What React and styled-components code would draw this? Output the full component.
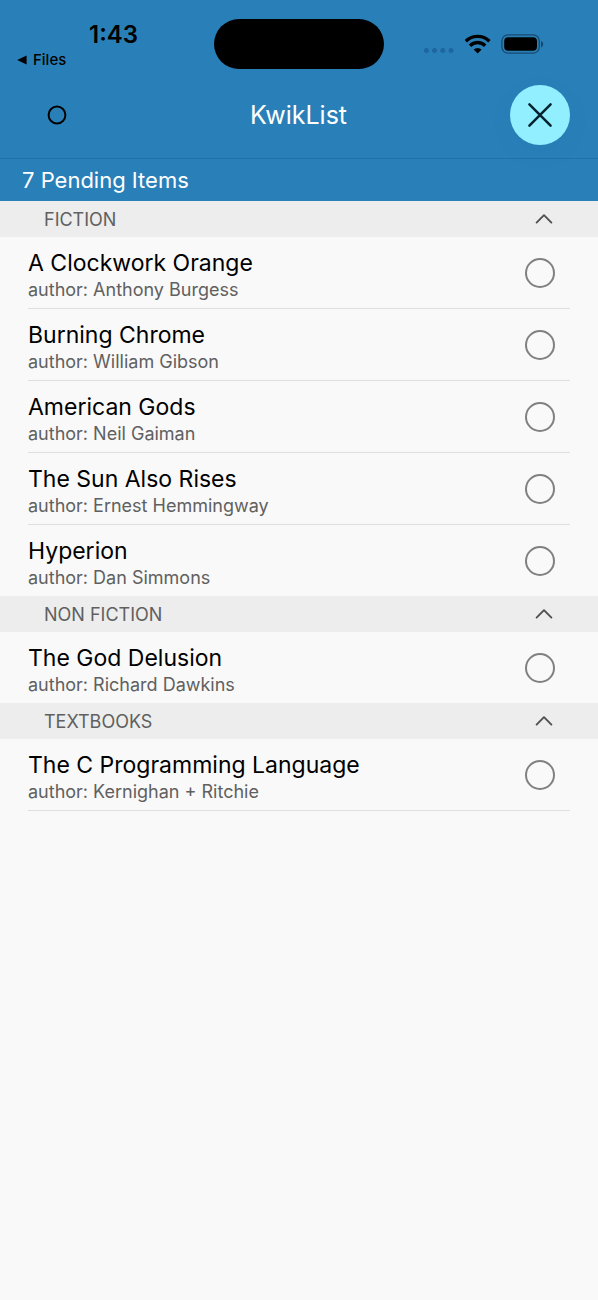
import React, { useState } from "react";
import styled, { createGlobalStyle } from "styled-components";

const lists = [
  {
    name: "Fiction",
    items: [
      { title: "A Clockwork Orange", author: "Anthony Burgess" },
      { title: "Burning Chrome", author: "William Gibson" },
      { title: "American Gods", author: "Neil Gaiman" },
      { title: "The Sun Also Rises", author: "Ernest Hemmingway" },
      { title: "Hyperion", author: "Dan Simmons" },
    ],
  },
  {
    name: "Non Fiction",
    items: [{ title: "The God Delusion", author: "Richard Dawkins" }],
  },
  {
    name: "Textbooks",
    items: [
      { title: "The C Programming Language", author: "Kernighan + Ritchie" },
    ],
  },
];

const StatusIcons = () => (
  <>
    <svg width="32" height="20" viewBox="0 0 32 20" aria-hidden="true">
      <g fill="#1f659f">
        <circle cx="3.4" cy="16.6" r="2.5" />
        <circle cx="11.6" cy="16.6" r="2.5" />
        <circle cx="19.8" cy="16.6" r="2.5" />
        <circle cx="28" cy="16.6" r="2.5" />
      </g>
    </svg>
    <svg width="26" height="20" viewBox="0 0 26 20" aria-hidden="true">
      <g fill="none" stroke="#000" strokeWidth="3.4">
        <path d="M0.8 7.2a16.8 16.8 0 0 1 23.6 0" />
        <path d="M5 11.7a10.8 10.8 0 0 1 15.2 0" />
      </g>
      <path d="M12.6 19.6l-4-4a5.8 5.8 0 0 1 8 0z" />
    </svg>
    <svg width="43" height="20" viewBox="0 0 43 20" aria-hidden="true">
      <rect
        x="0.9"
        y="0.9"
        width="37.4"
        height="18.2"
        rx="6"
        fill="none"
        stroke="#174a70"
        strokeWidth="1.3"
      />
      <rect x="3.2" y="3.2" width="32.8" height="13.6" rx="4" />
      <path d="M40 7v6.4c3-1 3-5.4 0-6.4z" fill="#174a70" />
    </svg>
  </>
);

const App = () => {
  const [closed, setClosed] = useState({});
  const [done, setDone] = useState({});

  const pending = lists
    .flatMap((list) => list.items)
    .filter((item) => !done[item.title]).length;

  const toggleList = (name) => setClosed({ ...closed, [name]: !closed[name] });
  const toggleItem = (title) => setDone({ ...done, [title]: !done[title] });

  return (
    <Page>
      <GlobalStyle />
      <Header>
        <StatusBar>
          <StatusLeft>
            <Time>1:43</Time>
            <BackLink href="#files">
              <svg width="10" height="10" viewBox="0 0 10 10" aria-hidden="true">
                <path d="M9.6 0.4v9.2L0.2 5z" />
              </svg>
              Files
            </BackLink>
          </StatusLeft>
          <Island />
          <StatusRight>
            <StatusIcons />
          </StatusRight>
        </StatusBar>
        <NavBar>
          <NavButton aria-label="Menu">
            <svg width="20" height="20" viewBox="0 0 20 20">
              <circle
                cx="10"
                cy="10"
                r="8.4"
                fill="none"
                stroke="#000"
                strokeWidth="2"
              />
            </svg>
          </NavButton>
          <NavTitle>KwikList</NavTitle>
          <NavButton $filled aria-label="Close">
            <svg width="26" height="26" viewBox="0 0 26 26">
              <path
                d="M2.4 2.4l21.2 21.2M23.6 2.4L2.4 23.6"
                fill="none"
                stroke="#06222e"
                strokeWidth="2.5"
                strokeLinecap="round"
              />
            </svg>
          </NavButton>
        </NavBar>
        <Pending>{pending} Pending Items</Pending>
      </Header>

      <main>
        {lists.map((list) => (
          <section key={list.name}>
            <ListHeader
              aria-expanded={!closed[list.name]}
              onClick={() => toggleList(list.name)}
            >
              {list.name}
              <Chevron
                $closed={closed[list.name]}
                width="18"
                height="12"
                viewBox="0 0 18 12"
                aria-hidden="true"
              >
                <path
                  d="M1.6 9.6L9 2.2l7.4 7.4"
                  fill="none"
                  stroke="#505050"
                  strokeWidth="1.9"
                  strokeLinejoin="round"
                  strokeLinecap="round"
                />
              </Chevron>
            </ListHeader>
            {!closed[list.name] && (
              <Items>
                {list.items.map((item) => (
                  <Item key={item.title}>
                    <ItemLabel>
                      <ItemText>
                        <ItemTitle>{item.title}</ItemTitle>
                        <ItemAuthor>author: {item.author}</ItemAuthor>
                      </ItemText>
                      <Check
                        type="checkbox"
                        checked={!!done[item.title]}
                        onChange={() => toggleItem(item.title)}
                      />
                    </ItemLabel>
                  </Item>
                ))}
              </Items>
            )}
          </section>
        ))}
      </main>
    </Page>
  );
};

export default App;

const GlobalStyle = createGlobalStyle`
  * {
    box-sizing: border-box;
  }
  body {
    margin: 0;
    background-color: #f9f9f9;
    font-family: Inter, "Liberation Sans", sans-serif;
  }
`;

const Page = styled.div`
  min-height: 100vh;
  background-color: #f9f9f9;
`;

const Header = styled.header`
  background-color: #2980b9;
  color: white;
`;

const StatusBar = styled.div`
  display: grid;
  grid-template-columns: 1fr 170px 1fr;
  padding-top: 19px;
  color: black;
`;

const StatusLeft = styled.div`
  padding: 1px 0 0 17px;
`;

const Time = styled.div`
  padding-left: 72px;
  font-size: 24px;
  font-weight: 600;
  line-height: 30px;
`;

const BackLink = styled.a`
  display: flex;
  align-items: center;
  gap: 6px;
  font-size: 15px;
  font-weight: 500;
  line-height: 20px;
  color: black;
  text-decoration: none;
`;

const Island = styled.div`
  height: 50px;
  border-radius: 25px;
  background-color: black;
`;

const StatusRight = styled.div`
  display: flex;
  align-items: center;
  justify-content: flex-end;
  gap: 10px;
  height: 50px;
  padding-right: 54px;
`;

const NavBar = styled.nav`
  display: flex;
  align-items: center;
  justify-content: space-between;
  padding: 15px 28px 13px 27px;
  border-bottom: 1px solid #2270a8;
`;

const NavButton = styled.button`
  display: flex;
  align-items: center;
  justify-content: center;
  width: 60px;
  height: 60px;
  padding: 0;
  border: none;
  border-radius: 50%;
  background-color: ${(props) => (props.$filled ? "#92efff" : "transparent")};
  box-shadow: ${(props) =>
    props.$filled ? "0 8px 24px rgba(0, 60, 120, 0.06)" : "none"};
  cursor: pointer;
`;

const NavTitle = styled.h1`
  margin: 0;
  font-size: 25px;
  font-weight: 400;
  line-height: 32px;
`;

const Pending = styled.div`
  padding: 6px 22px;
  font-size: 22px;
  line-height: 30px;
`;

const ListHeader = styled.button`
  display: flex;
  align-items: center;
  justify-content: space-between;
  width: 100%;
  height: 36px;
  padding: 0 45px 0 44px;
  border: none;
  background-color: #ededed;
  color: #606060;
  font-family: inherit;
  font-size: 18px;
  text-transform: uppercase;
  cursor: pointer;
`;

const Chevron = styled.svg`
  transform: ${(props) => (props.$closed ? "rotate(180deg)" : "none")};
`;

const Items = styled.ul`
  margin: 0;
  padding: 0 28px;
  list-style: none;

  section:not(:last-child) > & > li:last-child {
    border-bottom: none;
  }
`;

const Item = styled.li`
  border-bottom: 1px solid #dfdfdf;
`;

const ItemLabel = styled.label`
  display: flex;
  align-items: center;
  justify-content: space-between;
  padding: 6px 15px 6px 0;
  cursor: pointer;
`;

const ItemText = styled.div`
  padding-top: 5px;
`;

const ItemTitle = styled.div`
  font-size: 23px;
  line-height: 30px;
  color: black;
`;

const ItemAuthor = styled.div`
  font-size: 18px;
  line-height: 24px;
  color: #606060;
`;

const Check = styled.input`
  appearance: none;
  flex: none;
  width: 30px;
  height: 30px;
  margin: 0;
  border: 2px solid #808080;
  border-radius: 50%;
  cursor: pointer;

  &:checked {
    background-color: #808080;
  }
`;
